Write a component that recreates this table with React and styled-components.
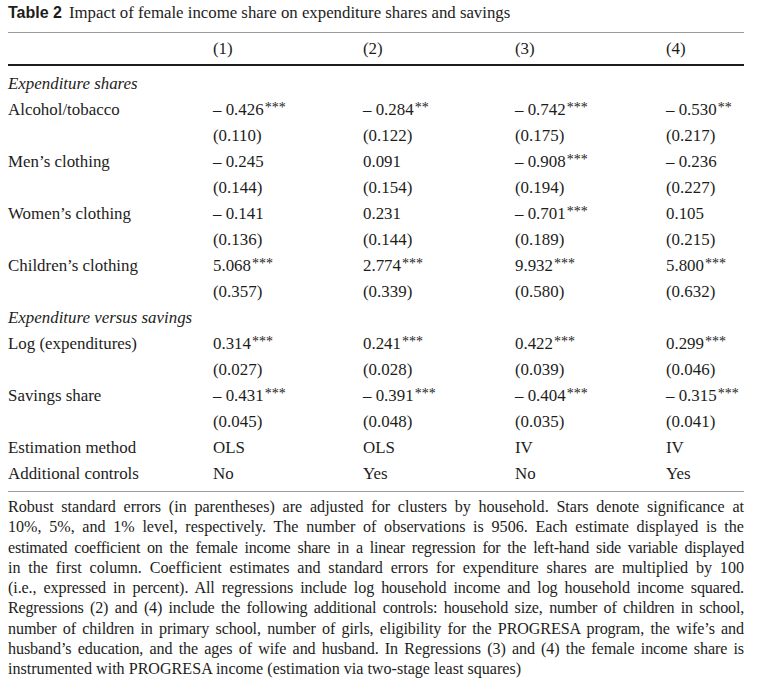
import React from "react";
import styled, { createGlobalStyle } from "styled-components";

const GlobalStyle = createGlobalStyle`
  html, body {
    margin: 0;
    padding: 0;
    background: #ffffff;
  }
  body {
    font-family: "Liberation Serif", "Times New Roman", serif;
    color: #1d1d1b;
  }
`;

const Page = styled.div`
  width: 736px;
  padding: 0 0 0 8px;
`;

const Caption = styled.div`
  height: 26px;
  line-height: 26px;
  font-size: 16.8px;
  white-space: nowrap;
  margin-bottom: 6px;

  b {
    font-family: "Liberation Sans", Arial, sans-serif;
    font-weight: 700;
    font-size: 16px;
    margin-right: 7px;
  }
`;

const Rule = styled.div`
  height: ${(p) => (p.$thick ? 2 : 1)}px;
  background: ${(p) => (p.$thick ? "#1d1d1b" : "#9a9a9a")};
`;

const Row = styled.div`
  display: grid;
  grid-template-columns: 205px 150px 152px 151px 1fr;
  align-items: center;
  height: ${(p) => p.$h || 26}px;
  font-size: 16.9px;
  white-space: nowrap;
`;

const Section = styled.div`
  grid-column: 1 / -1;
  font-style: italic;
`;

const Cell = styled.div``;

const Stars = styled.sup`
  font-size: 14px;
  vertical-align: 3px;
  line-height: 0;
  margin-left: 1px;
`;

const Body = styled.div`
  padding: 5px 0 4px;
`;

const Notes = styled.div`
  margin-top: 5px;
  font-size: 16.1px;
  line-height: 20.25px;
`;

const NoteLine = styled.div`
  white-space: nowrap;
  text-align: justify;
  text-align-last: ${(p) => (p.$last ? "left" : "justify")};
  letter-spacing: ${(p) => p.$ls || 0}px;
`;

const m = "\u2013 ";

const rows = [
  { section: "Expenditure shares" },
  { label: "Alcohol/tobacco", vals: [[m + "0.426", "***"], [m + "0.284", "**"], [m + "0.742", "***"], [m + "0.530", "**"]] },
  { vals: [["(0.110)"], ["(0.122)"], ["(0.175)"], ["(0.217)"]] },
  { label: "Men\u2019s clothing", vals: [[m + "0.245"], ["0.091"], [m + "0.908", "***"], [m + "0.236"]] },
  { vals: [["(0.144)"], ["(0.154)"], ["(0.194)"], ["(0.227)"]] },
  { label: "Women\u2019s clothing", vals: [[m + "0.141"], ["0.231"], [m + "0.701", "***"], ["0.105"]] },
  { vals: [["(0.136)"], ["(0.144)"], ["(0.189)"], ["(0.215)"]] },
  { label: "Children\u2019s clothing", vals: [["5.068", "***"], ["2.774", "***"], ["9.932", "***"], ["5.800", "***"]] },
  { vals: [["(0.357)"], ["(0.339)"], ["(0.580)"], ["(0.632)"]] },
  { section: "Expenditure versus savings" },
  { label: "Log (expenditures)", vals: [["0.314", "***"], ["0.241", "***"], ["0.422", "***"], ["0.299", "***"]] },
  { vals: [["(0.027)"], ["(0.028)"], ["(0.039)"], ["(0.046)"]] },
  { label: "Savings share", vals: [[m + "0.431", "***"], [m + "0.391", "***"], [m + "0.404", "***"], [m + "0.315", "***"]] },
  { vals: [["(0.045)"], ["(0.048)"], ["(0.035)"], ["(0.041)"]] },
  { label: "Estimation method", vals: [["OLS"], ["OLS"], ["IV"], ["IV"]] },
  { label: "Additional controls", vals: [["No"], ["Yes"], ["No"], ["Yes"]] },
];

const notes = [
  { t: "Robust standard errors (in parentheses) are adjusted for clusters by household. Stars denote significance at" },
  { t: "10%, 5%, and 1% level, respectively. The number of observations is 9506. Each estimate displayed is the" },
  { t: "estimated coefficient on the female income share in a linear regression for the left-hand side variable displayed", ls: -0.25 },
  { t: "in the first column. Coefficient estimates and standard errors for expenditure shares are multiplied by 100" },
  { t: "(i.e., expressed in percent). All regressions include log household income and log household income squared.", ls: -0.1 },
  { t: "Regressions (2) and (4) include the following additional controls: household size, number of children in school,", ls: -0.2 },
  { t: "number of children in primary school, number of girls, eligibility for the PROGRESA program, the wife\u2019s and", ls: -0.1 },
  { t: "husband\u2019s education, and the ages of wife and husband. In Regressions (3) and (4) the female income share is", ls: -0.1 },
  { t: "instrumented with PROGRESA income (estimation via two-stage least squares)" },
];

export default function App() {
  return (
    <>
      <GlobalStyle />
      <Page>
        <Caption>
          <b>Table 2</b>Impact of female income share on expenditure shares and savings
        </Caption>
        <Rule />
        <Row $h={31}>
          <Cell />
          <Cell>(1)</Cell>
          <Cell>(2)</Cell>
          <Cell>(3)</Cell>
          <Cell>(4)</Cell>
        </Row>
        <Rule $thick />
        <Body>
          {rows.map((r, i) =>
            r.section ? (
              <Row key={i}>
                <Section>{r.section}</Section>
              </Row>
            ) : (
              <Row key={i}>
                <Cell>{r.label || ""}</Cell>
                {r.vals.map(([v, s], j) => (
                  <Cell key={j}>
                    {v}
                    {s && <Stars>{s}</Stars>}
                  </Cell>
                ))}
              </Row>
            )
          )}
        </Body>
        <Rule />
        <Notes>
          {notes.map((n, i) => (
            <NoteLine key={i} $ls={n.ls} $last={i === notes.length - 1}>
              {n.t}
            </NoteLine>
          ))}
        </Notes>
      </Page>
    </>
  );
}
